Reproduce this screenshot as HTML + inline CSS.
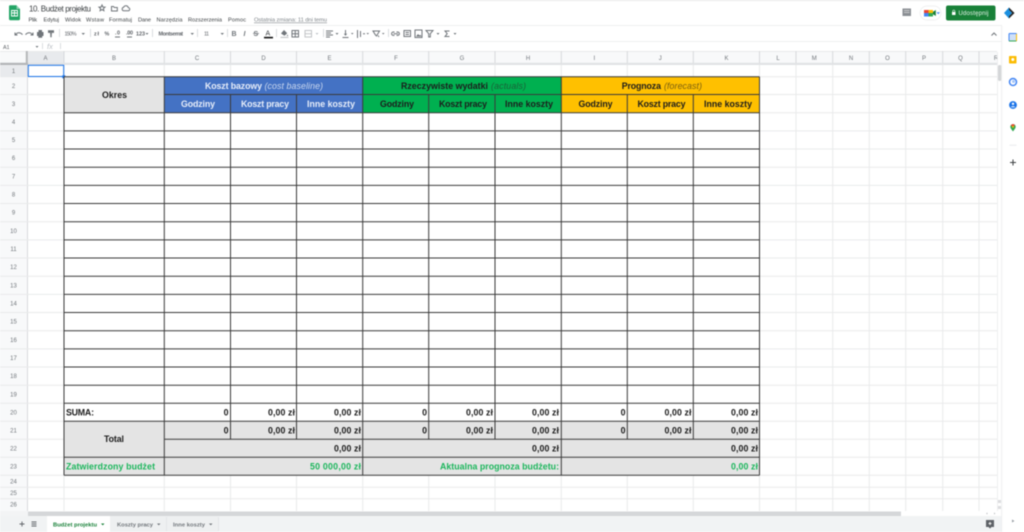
<!DOCTYPE html>
<html lang="pl"><head><meta charset="utf-8"><title>10. Budżet projektu</title>
<style>
html,body{margin:0;padding:0;background:#fff;width:1024px;height:532px;overflow:hidden}
svg{display:block;filter:blur(.4px)}
text{font-family:"Liberation Sans",sans-serif}
.m{font-size:5.6px;fill:#3c4043}
.t{font-size:5.4px;fill:#5f6368}
.h{font-size:6px;fill:#70757a;text-anchor:middle}
.b{font-size:8.8px;font-weight:700;fill:#1c1c1c}
.w{fill:#e8eefa}
.i{font-size:8.8px;font-style:italic}
.g{fill:#1cb65c}
.r{text-anchor:end}
.ic{fill:none;stroke:#70757a;stroke-width:1}
.car{fill:#70757a}
.sep{stroke:#dadce0;stroke-width:1}
</style></head><body>
<svg width="1024" height="532" viewBox="0 0 1024 532" xmlns="http://www.w3.org/2000/svg">
<rect width="1024" height="532" fill="#fff"/>
<rect width="1024" height="1" fill="#e8e8e8"/>
<!-- logo -->
<path d="M9 6.500a1.200 1.200 0 0 1 1.200-1.200H16.500L20 9V19a1.200 1.200 0 0 1-1.200 1.200H10.200A1.200 1.200 0 0 1 9 19Z" fill="#23a566"/>
<path d="M16.500 5.300V9H20Z" fill="#8ed1b1"/>
<path d="M11.500 10.500h6v5.500h-6ZM11.500 13h6M14.500 10.500v5.500" fill="none" stroke="#fff" stroke-width=".9"/>
<!-- title -->
<text x="29" y="11.500" font-size="8" fill="#3c4043" textLength="62">10. Budżet projektu</text>
<path d="M102 5l.9 2 2.100.2-1.600 1.400.5 2.100-1.900-1.100-1.900 1.100.5-2.100-1.600-1.400 2.100-.2Z" class="ic" stroke-width=".8"/>
<path d="M111.500 6.500h2l.8 1h3v3.500h-5.800Z" class="ic" stroke-width=".8"/>
<path d="M123.500 10.800h4.500a1.600 1.600 0 0 0 .3-3.200 2.500 2.500 0 0 0-4.700-.3 1.800 1.800 0 0 0-.1 3.500Z" class="ic" stroke-width=".8"/>
<!-- menu -->
<text class="m" x="28.500" y="21.500" textLength="8.500">Plik</text>
<text class="m" x="43.500" y="21.500" textLength="15.500">Edytuj</text>
<text class="m" x="65" y="21.500" textLength="16">Widok</text>
<text class="m" x="86" y="21.500" textLength="18">Wstaw</text>
<text class="m" x="109" y="21.500" textLength="23">Formatuj</text>
<text class="m" x="138" y="21.500" textLength="13">Dane</text>
<text class="m" x="156.500" y="21.500" textLength="26">Narzędzia</text>
<text class="m" x="188" y="21.500" textLength="34">Rozszerzenia</text>
<text class="m" x="228" y="21.500" textLength="18">Pomoc</text>
<text x="254" y="21.500" font-size="5.800" fill="#80868b" text-decoration="underline" textLength="73">Ostatnia zmiana: 11 dni temu</text>
<!-- top right -->
<path d="M902.500 8.500h8.500v7.500h-6.500l-2 0Z" fill="#8a8e93"/><path d="M904 10.500h5.500M904 12.500h5.500" stroke="#ddd" stroke-width=".7"/>
<rect x="920" y="6" width="21" height="14" rx="7" fill="#fff" stroke="#eceded" stroke-width=".7"/>
<rect x="924" y="10" width="4.500" height="3" fill="#ea4335"/><rect x="924" y="13" width="4.500" height="3.500" fill="#4285f4"/>
<rect x="928.500" y="10" width="4.500" height="3" fill="#fbbc04"/><rect x="928.500" y="13" width="4.500" height="3.500" fill="#34a853"/>
<path d="M933 11.800l2.800-1.800v6l-2.800-1.800Z" fill="#188038"/>
<path d="M936.500 12.300h3.500l-1.750 1.900Z" fill="#4285f4"/>
<rect x="946" y="5.500" width="49.500" height="15" rx="2" fill="#188038"/>
<rect x="952" y="12" width="3.500" height="3" fill="#fff"/><path d="M952.800 12v-1a1 1 0 0 1 2 0v1" fill="none" stroke="#fff" stroke-width=".6"/>
<text x="958.500" y="15" font-size="6" fill="#e9f4ec" textLength="30">Udostępnij</text>
<path d="M1004 13l5-5.500v11Z" fill="#1a8fe0"/><path d="M1009 7.500l5.500 5.500-5.500 5.500 0-2.500 3-3-3-3Z" fill="#222"/><path d="M1009 10l3 3-3 3Z" fill="#1a8fe0"/>
<!-- toolbar -->
<path d="M0 25.500H1002M0 41.500H1002" stroke="#eeeff0" stroke-width="1"/>
<path d="M15 35l2-1.800q3-1.300 5.500 1.400M15 32.500v2.500h2.500" class="ic" stroke-width=".9"/>
<path d="M33 35l-2-1.800q-3-1.300-5.500 1.400M33 32.500v2.500h-2.500" class="ic" stroke-width=".9"/>
<path d="M37 32h6.500v4h-1.300v1.800h-3.900v-1.800H37Z" fill="#70757a"/><rect x="38.500" y="30" width="3.500" height="2" fill="#70757a"/>
<path d="M48 30.200h6v2.700h-6ZM50 33h2l-.3 1.600 0 2.700h-1.400v-2.700Z" fill="#70757a"/>
<path class="sep" d="M59.500 29v8M90.500 29v8M152.500 29v8M197.500 29v8M227.500 29v8M276.500 29v8M323.500 29v8M388.500 29v8"/>
<text class="t" x="64.500" y="35.500" textLength="12">150%</text>
<path class="car" d="M81.500 33h3.500l-1.750 1.900Z"/>
<text class="t" x="94" y="35.500" textLength="5" font-weight="700">zł</text>
<text class="t" x="104.500" y="35.500" textLength="5" font-weight="700">%</text>
<text class="t" x="115" y="34.500" textLength="5" font-weight="700">.0</text><path class="ic" stroke-width=".6" d="M115 37h5"/>
<text class="t" x="126" y="34.500" textLength="7" font-weight="700">.00</text><path class="ic" stroke-width=".6" d="M127 37h5"/>
<text class="t" x="136" y="35.500" textLength="9" font-weight="700">123</text><path class="car" d="M145.500 33h3l-1.500 1.700Z"/>
<text class="t" x="158.500" y="35.500" textLength="24.500" font-weight="700">Montserrat</text><path class="car" d="M190.500 33h3.500l-1.750 1.900Z"/>
<text class="t" x="204" y="35.500" textLength="5">11</text><path class="car" d="M220.500 33h3.500l-1.750 1.900Z"/>
<text x="231.500" y="36" font-size="7" font-weight="700" fill="#70757a">B</text>
<text x="243.500" y="36" font-size="7" font-style="italic" font-weight="700" fill="#70757a">I</text>
<text x="253.500" y="36" font-size="7" font-weight="700" fill="#70757a">S</text><path d="M253 33.500h6" stroke="#70757a" stroke-width=".7"/>
<text x="265.500" y="35.500" font-size="7" fill="#3c4043">A</text><rect x="264" y="36.800" width="9" height="1.600" fill="#111"/>
<path d="M281 33.500l3-3.500 3.200 3.200-2.700 2.500Z" fill="#70757a"/><path d="M287.500 34.500l.8 1.500h-1.600Z" fill="#70757a"/><rect x="280.500" y="36.800" width="8" height="1.200" fill="#c6c8ca"/>
<path class="ic" d="M292 30.500h6.500v6.500h-6.500ZM295.250 30.500v6.500M292 33.750h6.500"/>
<path d="M305 30.500h6.500v6.500h-6.500Z" fill="none" stroke="#c2c4c7"/><path d="M305 33.750h6.500" stroke="#c2c4c7"/><path d="M315.500 33h3l-1.500 1.700Z" fill="#bdc1c6"/>
<path class="ic" d="M326 31h7M326 33h5M326 35h7M326 37h4"/><path class="car" d="M335.500 33h3l-1.500 1.700Z"/>
<path class="ic" d="M342.500 37.500h6M345.500 30v5.500"/><path class="car" d="M343.800 33.800h3.400l-1.700 2Z"/><path class="car" d="M351 33h2.500l-1.250 1.500Z"/>
<path class="ic" d="M357.500 30v8M360.500 31v6M363 33.800h2"/><path class="car" d="M366.500 33h2.500l-1.250 1.500Z"/>
<path class="ic" d="M373 31h6.500l-3 5-1-1ZM378 35.500l1 1.500"/><path class="car" d="M382 33h2.500l-1.250 1.500Z"/>
<path class="ic" stroke-width="1.100" d="M394.500 32h-1.200a1.700 1.700 0 0 0 0 3.400h1.200M396.500 32h1.200a1.700 1.700 0 0 1 0 3.400h-1.200M393.500 33.700h4.500"/>
<path class="ic" d="M404 30.500h6.500v6h-6.500ZM405.500 32.500h3.500M405.500 34.500h3.500"/>
<path class="ic" d="M415 30h7v7.500h-7Z"/><path class="car" d="M416 36.500l2-2.500 1.500 1.500 1-.8 1 1.800Z"/>
<path d="M426 30.500h7l-2.700 3.200v3.300h-1.600v-3.300Z" class="ic" stroke-width=".9"/><path class="car" d="M436.500 33h3l-1.500 1.700Z"/>
<path d="M449.500 31h-4.500l2.200 2.700-2.200 2.800h4.500" class="ic" stroke-width=".9"/><path class="car" d="M453.500 33h3l-1.500 1.700Z"/>
<path d="M991.500 35.500l2.500-2.500 2.500 2.500" class="ic"/>
<!-- formula bar -->
<text class="t" x="3" y="48.800" textLength="6.500" fill="#3c4043">A1</text>
<path class="car" d="M35.500 46h3l-1.500 1.700Z"/>
<path class="sep" d="M42.500 43v6M60.500 43v6"/>
<text x="47" y="49" font-family="Liberation Serif" font-size="7.500" font-style="italic" fill="#bdc1c6">fx</text>
<!-- column headers -->
<rect x="0" y="51" width="997" height="14" fill="#f8f9fa"/>
<rect x="28" y="51" width="36" height="14" fill="#e8eaed"/>
<rect x="0" y="51" width="1002" height="1" fill="#e8e9ea"/>
<rect x="0" y="62.800" width="997" height="2.200" fill="#e1e3e5"/>
<rect x="25.800" y="51" width="2" height="14" fill="#b4b6b8"/>
<rect x="0" y="62.800" width="28" height="2.200" fill="#b4b6b8"/>
<path d="M64 51V63M164.300 51V63M230.500 51V63M296.500 51V63M362.700 51V63M428.700 51V63M495 51V63M561.300 51V63M627.300 51V63M693.300 51V63M759.500 51V63M796 51V63M832.700 51V63M869.300 51V63M905.700 51V63M942.700 51V63M979 51V63" stroke="#d7d9db" stroke-width="1"/>
<g>
<text class="h" x="45.500" y="60">A</text><text class="h" x="114" y="60">B</text><text class="h" x="197" y="60">C</text><text class="h" x="263.500" y="60">D</text><text class="h" x="329.500" y="60">E</text><text class="h" x="396" y="60">F</text><text class="h" x="462" y="60">G</text><text class="h" x="528" y="60">H</text><text class="h" x="594.300" y="60">I</text><text class="h" x="660.300" y="60">J</text><text class="h" x="726.500" y="60">K</text><text class="h" x="778" y="60">L</text><text class="h" x="814.300" y="60">M</text><text class="h" x="851" y="60">N</text><text class="h" x="887.500" y="60">O</text><text class="h" x="924" y="60">P</text><text class="h" x="960.500" y="60">Q</text><text class="h" x="996" y="60">R</text>
</g>
<!-- row header -->
<rect x="0" y="65" width="28" height="446" fill="#f8f9fa"/>
<rect x="0" y="65" width="28" height="11.700" fill="#e8eaed"/>
<rect x="27" y="65" width="1" height="446" fill="#d9dbdd"/>
<g>
<text class="h" x="13.500" y="73.200">1</text><text class="h" x="13.500" y="88">2</text><text class="h" x="13.500" y="106">3</text><text class="h" x="13.500" y="124">4</text><text class="h" x="13.500" y="142">5</text><text class="h" x="13.500" y="160">6</text><text class="h" x="13.500" y="178.500">7</text><text class="h" x="13.500" y="196.500">8</text><text class="h" x="13.500" y="214.500">9</text><text class="h" x="13.500" y="233">10</text><text class="h" x="13.500" y="251">11</text><text class="h" x="13.500" y="269">12</text><text class="h" x="13.500" y="287.500">13</text><text class="h" x="13.500" y="305.500">14</text><text class="h" x="13.500" y="323.500">15</text><text class="h" x="13.500" y="342">16</text><text class="h" x="13.500" y="360">17</text><text class="h" x="13.500" y="378">18</text><text class="h" x="13.500" y="396.500">19</text><text class="h" x="13.500" y="414.500">20</text><text class="h" x="13.500" y="432.500">21</text><text class="h" x="13.500" y="450.500">22</text><text class="h" x="13.500" y="468.500">23</text><text class="h" x="13.500" y="483.500">24</text><text class="h" x="13.500" y="495">25</text><text class="h" x="13.500" y="506.500">26</text>
</g>
<!-- row-header separators + grid -->
<path stroke="#e9eaeb" stroke-width="1" fill="none" d="M0 76.700H997M0 94.500H997M0 112.700H997M0 130.900H997M0 149H997M0 167.200H997M0 185.400H997M0 203.500H997M0 221.700H997M0 239.900H997M0 258H997M0 276.200H997M0 294.400H997M0 312.500H997M0 330.700H997M0 348.900H997M0 367H997M0 385.200H997M0 403.300H997M0 421.300H997M0 439.300H997M0 457.300H997M0 475.300H997M0 487.300H997M0 498.700H997"/>
<path stroke="#e9eaeb" stroke-width="1" fill="none" d="M64 65V511M164.300 65V511M230.500 65V511M296.500 65V511M362.700 65V511M428.700 65V511M495 65V511M561.300 65V511M627.300 65V511M693.300 65V511M759.500 65V511M796 65V511M832.700 65V511M869.300 65V511M905.700 65V511M942.700 65V511M979 65V511"/>
<!-- selection -->
<rect x="28.300" y="65.300" width="35.400" height="11.200" fill="#fff" stroke="#1a73e8" stroke-width="1"/>
<rect x="62.300" y="75.300" width="3" height="3" fill="#1a73e8"/>
<!-- fills -->
<rect x="64" y="76.700" width="100.300" height="36" fill="#e4e4e4"/>
<rect x="164.300" y="76.700" width="198.400" height="36" fill="#4472c4"/>
<rect x="362.700" y="76.700" width="198.600" height="36" fill="#00b050"/>
<rect x="561.300" y="76.700" width="198.200" height="36" fill="#ffc000"/>
<rect x="64" y="112.700" width="695.500" height="308.600" fill="#fff"/>
<rect x="64" y="421.300" width="695.500" height="54" fill="#e4e4e4"/>
<!-- table lines -->
<path stroke="#3a3a3a" stroke-width="1" fill="none" d="M64 76.700H759.500M64 112.700H759.500M64 130.900H759.500M64 149H759.500M64 167.200H759.500M64 185.400H759.500M64 203.500H759.500M64 221.700H759.500M64 239.900H759.500M64 258H759.500M64 276.200H759.500M64 294.400H759.500M64 312.500H759.500M64 330.700H759.500M64 348.900H759.500M64 367H759.500M64 385.200H759.500M64 403.300H759.500M64 421.300H759.500M164.300 439.300H759.500M64 457.300H759.500M64 475.300H759.500M164.300 94.500H759.500"/>
<path stroke="#3a3a3a" stroke-width="1" fill="none" d="M64 76.700V475.300M164.300 76.700V475.300M362.700 76.700V475.300M561.300 76.700V475.300M759.500 76.700V475.300M230.500 94.500V439.300M296.500 94.500V439.300M428.700 94.500V439.300M495 94.500V439.300M627.300 94.500V439.300M693.300 94.500V439.300"/>
<!-- header text -->
<text class="b" x="102" y="98" textLength="25">Okres</text>
<text class="b w" x="205" y="89" textLength="57">Koszt bazowy</text>
<text class="i" x="264.500" y="89" textLength="58.500" fill="#c9d7ef">(cost baseline)</text>
<text class="b" x="401" y="89" textLength="87">Rzeczywiste wydatki</text>
<text class="i" x="491" y="89" textLength="35" fill="#1b5f38">(actuals)</text>
<text class="b" x="621.700" y="89" textLength="39.300">Prognoza</text>
<text class="i" x="664" y="89" textLength="38" fill="#7a5f10">(forecast)</text>
<text class="b w" x="181" y="107" textLength="34">Godziny</text>
<text class="b w" x="241" y="107" textLength="48">Koszt pracy</text>
<text class="b w" x="307" y="107" textLength="48">Inne koszty</text>
<text class="b" x="380" y="107" textLength="34">Godziny</text>
<text class="b" x="439" y="107" textLength="48">Koszt pracy</text>
<text class="b" x="505" y="107" textLength="48">Inne koszty</text>
<text class="b" x="578.500" y="107" textLength="34">Godziny</text>
<text class="b" x="637.500" y="107" textLength="48">Koszt pracy</text>
<text class="b" x="704" y="107" textLength="48">Inne koszty</text>
<!-- row 20 -->
<text class="b" x="66" y="415.500" textLength="28">SUMA:</text>
<text class="b r" x="228.500" y="415.500">0</text><text class="b" x="268" y="415.500" textLength="27">0,00 zł</text><text class="b" x="334" y="415.500" textLength="27">0,00 zł</text>
<text class="b r" x="427" y="415.500">0</text><text class="b" x="466" y="415.500" textLength="27">0,00 zł</text><text class="b" x="532" y="415.500" textLength="27">0,00 zł</text>
<text class="b r" x="625.500" y="415.500">0</text><text class="b" x="664.500" y="415.500" textLength="27">0,00 zł</text><text class="b" x="731" y="415.500" textLength="27">0,00 zł</text>
<!-- row 21 -->
<text class="b" x="104" y="442" textLength="20">Total</text>
<text class="b r" x="228.500" y="433.500">0</text><text class="b" x="268" y="433.500" textLength="27">0,00 zł</text><text class="b" x="334" y="433.500" textLength="27">0,00 zł</text>
<text class="b r" x="427" y="433.500">0</text><text class="b" x="466" y="433.500" textLength="27">0,00 zł</text><text class="b" x="532" y="433.500" textLength="27">0,00 zł</text>
<text class="b r" x="625.500" y="433.500">0</text><text class="b" x="664.500" y="433.500" textLength="27">0,00 zł</text><text class="b" x="731" y="433.500" textLength="27">0,00 zł</text>
<!-- row 22 -->
<text class="b" x="334" y="451.500" textLength="27">0,00 zł</text><text class="b" x="532" y="451.500" textLength="27">0,00 zł</text><text class="b" x="731" y="451.500" textLength="27">0,00 zł</text>
<!-- row 23 -->
<text class="b g" x="66" y="469.500" textLength="89">Zatwierdzony budżet</text>
<text class="b g" x="310" y="469.500" textLength="51">50 000,00 zł</text>
<text class="b g" x="440" y="469.500" textLength="119">Aktualna prognoza budżetu:</text>
<text class="b g" x="731" y="469.500" textLength="27">0,00 zł</text>
<!-- scrollbars -->
<rect x="997" y="51" width="5" height="465" fill="#fff"/>
<path d="M997.500 52V511" stroke="#eeeff0"/>
<rect x="998" y="65" width="3.500" height="16" rx="1.700" fill="#d4d6d8"/>
<rect x="0" y="511" width="1002" height="5.500" fill="#fff"/>
<rect x="0" y="511" width="28" height="5.500" fill="#f3f4f5"/>
<rect x="28" y="511.500" width="873" height="4.500" fill="#d5d7d9"/>
<path d="M986 513.500l1.500-1v2ZM994 512.500l1.500 1-1.500 1Z" fill="#bdbfc1"/>
<rect x="998" y="500" width="3" height="3" fill="#dcdddf"/><rect x="998" y="506" width="3" height="3" fill="#dcdddf"/>
<!-- tab bar -->
<rect x="0" y="516" width="1002" height="16" fill="#f1f3f4"/>
<path d="M19.500 524h5M22 521.500v5" stroke="#5f6368" stroke-width=".9"/>
<path d="M31.500 522h5M31.500 524h5M31.500 526h5" stroke="#5f6368" stroke-width="1.100"/>
<rect x="47" y="516" width="63" height="16" fill="#fff"/>
<rect x="110" y="516" width="56" height="16" fill="#eef0f1"/>
<rect x="166" y="516" width="52" height="16" fill="#eef0f1"/>
<path d="M166.500 517V531M218.500 517V531" stroke="#e4e6e8"/>
<text x="53" y="526.500" font-size="5.800" font-weight="700" fill="#188038" textLength="44">Budżet projektu</text>
<path d="M101 523.500h3.500l-1.750 1.900Z" fill="#188038"/>
<text x="117" y="526.500" font-size="5.800" font-weight="700" fill="#70757a" textLength="36">Koszty pracy</text>
<path d="M157 523.500h3.500l-1.750 1.900Z" class="car"/>
<text x="173" y="526.500" font-size="5.800" font-weight="700" fill="#70757a" textLength="32">Inne koszty</text>
<path d="M209 523.500h3.500l-1.750 1.900Z" class="car"/>
<path d="M986 520h8v7h-2.500l-1.500 1.500-1.500-1.500H986Z" fill="#5f6368"/><path d="M988.500 523.500h3M990 522v3" stroke="#eee" stroke-width="1"/>
<!-- side panel -->
<rect x="1002" y="26" width="22" height="506" fill="#fff"/>
<path d="M1001.700 26V532" stroke="#eeeff0"/>
<rect x="1009" y="33.500" width="7.500" height="7.500" rx=".7" fill="#cfe0f8" stroke="#4285f4" stroke-width="1"/><path d="M1009 41h7.500" stroke="#34a853"/><path d="M1016.500 34v7" stroke="#fbbc04"/>
<rect x="1009" y="56" width="7.500" height="7.500" rx=".7" fill="#fbbc04"/><circle cx="1012.800" cy="59.500" r="1.500" fill="#fff"/>
<circle cx="1013" cy="82" r="3.500" fill="none" stroke="#4285f4" stroke-width="1.500"/><circle cx="1013.500" cy="81.500" r="1.500" fill="#a4c5f8"/>
<circle cx="1013" cy="105" r="3.900" fill="#1a73e8"/><circle cx="1013" cy="103.800" r="1.200" fill="#fff"/><path d="M1010.800 107.300a2.300 1.700 0 0 1 4.400 0Z" fill="#fff"/>
<path d="M1013 131.500c-1.400-2-2.700-3.200-2.700-4.700a2.700 2.700 0 0 1 5.400 0c0 1.500-1.300 2.700-2.700 4.700Z" fill="#34a853"/><path d="M1010.800 125.500a2.700 2.700 0 0 1 4.200-.6l-2 2Z" fill="#ea4335"/><circle cx="1013" cy="126.800" r="1" fill="#fbbc04"/>
<path d="M1009.500 145.200h7" stroke="#e8eaed"/>
<path d="M1010 162.500h6M1013 159.500v6" stroke="#3c4043" stroke-width="1"/>
<path d="M1012 519.500l2.500 1.500-2.500 1.500Z" fill="#9aa0a6"/>
</svg>
</body></html>
